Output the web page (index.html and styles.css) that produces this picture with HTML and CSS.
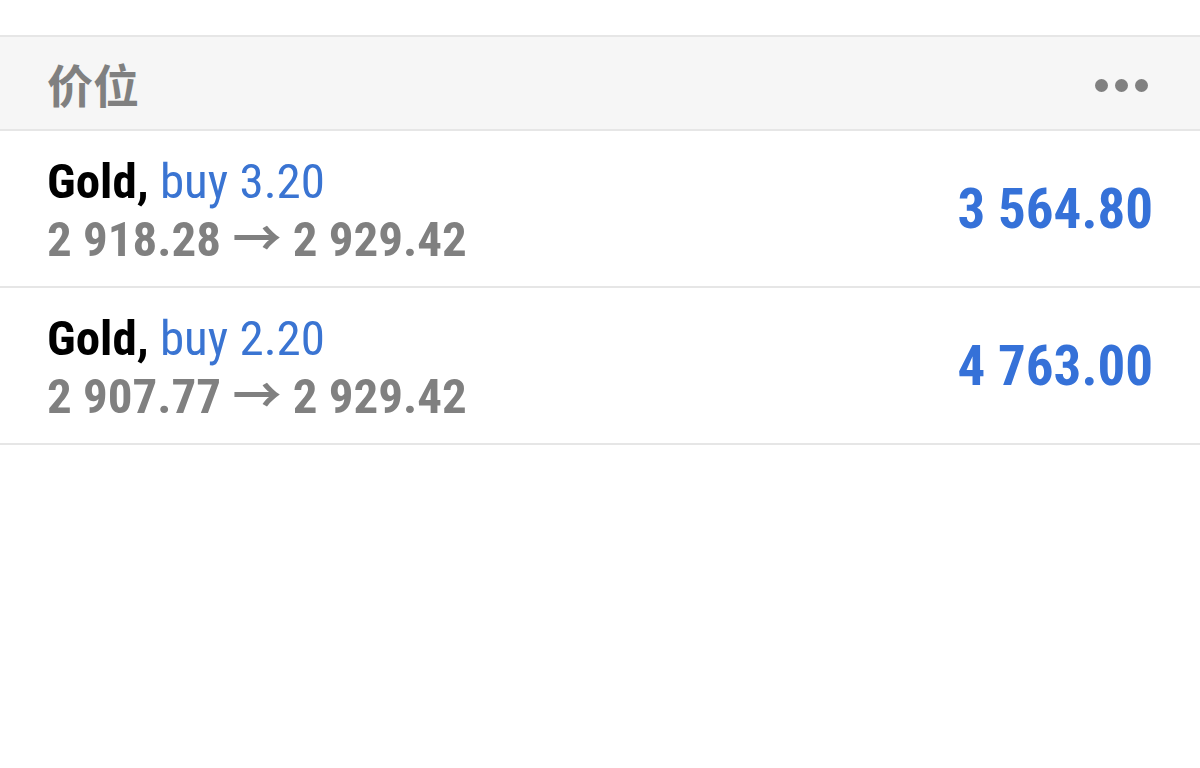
FILE: index.html
```html
<!DOCTYPE html>
<html lang="zh">
<head>
<meta charset="utf-8">
<title>价位</title>
<link rel="stylesheet" href="styles.css">
</head>
<body>
<div class="top"></div>
<section class="panel">
  <header class="panel-head">
    <h1 class="panel-title">价位</h1>
    <div class="more"><span class="dot"></span><span class="dot"></span><span class="dot"></span></div>
  </header>
  <ul class="positions">
    <li class="pos">
      <div class="pos-info">
        <div class="pos-title"><span class="sym">Gold,</span> <span class="side">buy 3.20</span></div>
        <div class="pos-prices">2 918.28 → 2 929.42</div>
      </div>
      <div class="pos-profit">3 564.80</div>
    </li>
    <li class="pos">
      <div class="pos-info">
        <div class="pos-title"><span class="sym">Gold,</span> <span class="side">buy 2.20</span></div>
        <div class="pos-prices">2 907.77 → 2 929.42</div>
      </div>
      <div class="pos-profit">4 763.00</div>
    </li>
  </ul>
</section>
</body>
</html>
```
FILE: styles.css
```css
html, body {
  margin: 0;
  padding: 0;
  background: #ffffff;
}
body {
  font-family: "Roboto Condensed", "Roboto", "Noto Sans CJK SC", sans-serif;
  font-stretch: condensed;
}
.top {
  height: 35px;
}
.panel-head {
  display: flex;
  align-items: center;
  justify-content: space-between;
  height: 92px;
  padding: 0 52px 0 47px;
  background: #f6f6f6;
  border-top: 2px solid #e6e6e6;
  border-bottom: 2px solid #e6e6e6;
}
.panel-title {
  margin: 0;
  font-family: "Noto Sans CJK SC", sans-serif;
  font-size: 46px;
  font-weight: 700;
  color: #808080;
  line-height: 1;
}
.more {
  display: flex;
  gap: 7px;
  margin-top: 4px;
}
.dot {
  width: 13px;
  height: 13px;
  border-radius: 50%;
  background: #808080;
}
.positions {
  list-style: none;
  margin: 0;
  padding: 0;
}
.pos {
  display: flex;
  align-items: center;
  justify-content: space-between;
  height: 155px;
  padding: 0 47px;
  border-bottom: 2px solid #e6e6e6;
}
.pos-info {
  font-size: 49px;
  line-height: 58px;
  padding-top: 4px;
}
.sym {
  font-weight: 700;
  color: #000000;
}
.side {
  color: #3a74d2;
}
.pos-prices {
  font-weight: 700;
  color: #808080;
}
.pos-profit {
  font-size: 55px;
  font-weight: 700;
  color: #3571d8;
}
```
